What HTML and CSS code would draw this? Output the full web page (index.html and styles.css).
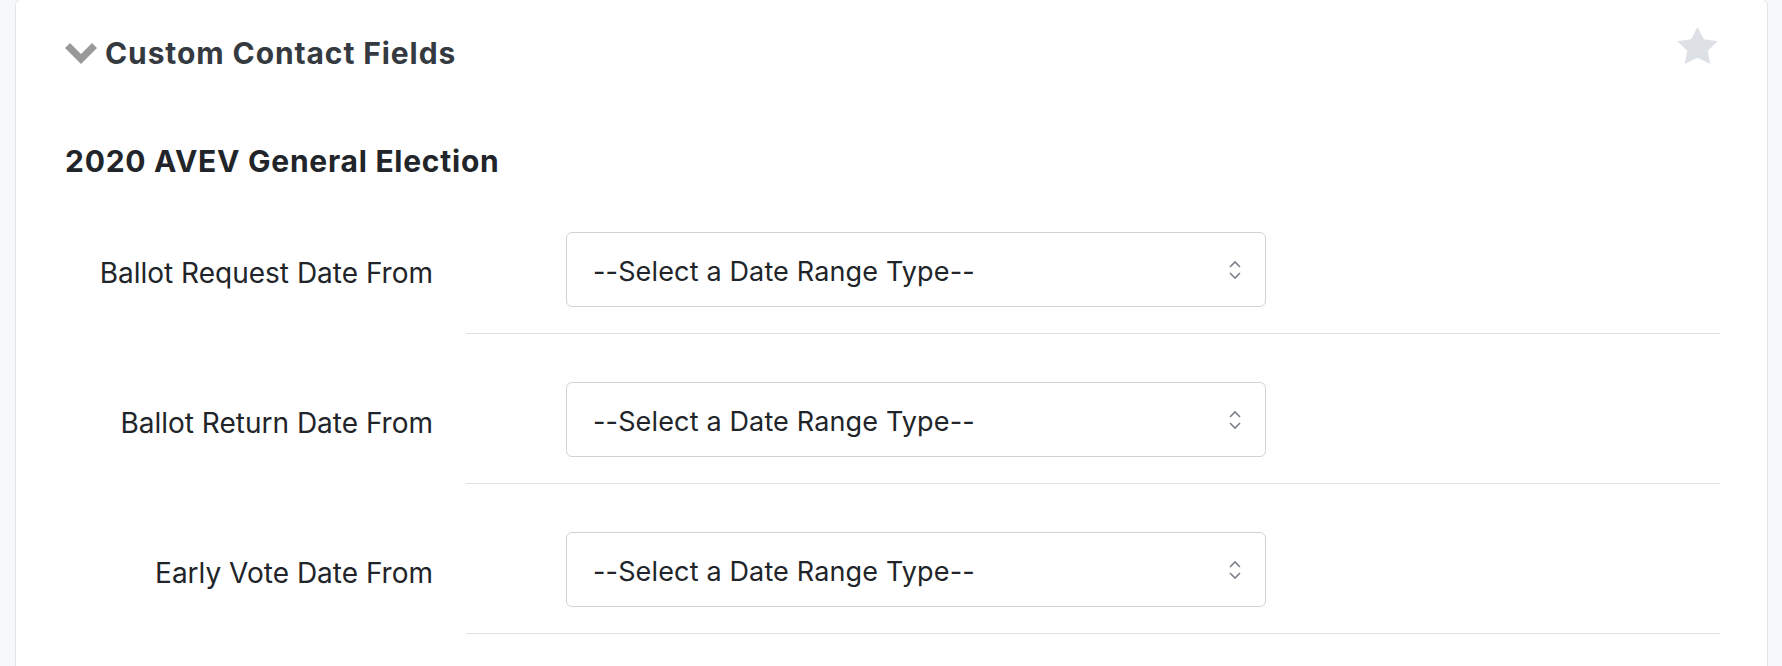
FILE: index.html
```html
<!DOCTYPE html>
<html lang="en">
<head>
<meta charset="utf-8">
<title>Custom Contact Fields</title>
<link rel="stylesheet" href="styles.css">
</head>
<body>
<div class="page">
  <section class="card">
    <header class="card-head">
      <h2 class="card-title">
        <svg class="chevron" width="32" height="21" viewBox="0 0 32 21" aria-hidden="true"><polygon points="0,5 5,0 16,11 27,0 32,5 16,21" fill="#999999"/></svg>
        <span>Custom Contact Fields</span>
      </h2>
      <svg class="star" width="41" height="37" viewBox="2 2 20 19.02" preserveAspectRatio="none" aria-hidden="true"><polygon points="12,2 15.09,8.26 22,9.27 17,14.14 18.18,21.02 12,17.77 5.82,21.02 7,14.14 2,9.27 8.91,8.26" fill="#dde0e5"/></svg>
    </header>

    <h3 class="group-title">2020 AVEV General Election</h3>

    <div class="form-row">
      <label class="row-label">Ballot Request Date From</label>
      <div class="row-field">
        <div class="select">
          <span>--Select a Date Range Type--</span>
          <svg class="updown" width="14" height="22" viewBox="0 0 14 22" aria-hidden="true"><polyline points="2,8 7,3 12,8" fill="none" stroke="#7b8188" stroke-width="1.6"/><polyline points="2,14 7,19 12,14" fill="none" stroke="#7b8188" stroke-width="1.6"/></svg>
        </div>
      </div>
    </div>

    <div class="form-row">
      <label class="row-label">Ballot Return Date From</label>
      <div class="row-field">
        <div class="select">
          <span>--Select a Date Range Type--</span>
          <svg class="updown" width="14" height="22" viewBox="0 0 14 22" aria-hidden="true"><polyline points="2,8 7,3 12,8" fill="none" stroke="#7b8188" stroke-width="1.6"/><polyline points="2,14 7,19 12,14" fill="none" stroke="#7b8188" stroke-width="1.6"/></svg>
        </div>
      </div>
    </div>

    <div class="form-row">
      <label class="row-label">Early Vote Date From</label>
      <div class="row-field">
        <div class="select">
          <span>--Select a Date Range Type--</span>
          <svg class="updown" width="14" height="22" viewBox="0 0 14 22" aria-hidden="true"><polyline points="2,8 7,3 12,8" fill="none" stroke="#7b8188" stroke-width="1.6"/><polyline points="2,14 7,19 12,14" fill="none" stroke="#7b8188" stroke-width="1.6"/></svg>
        </div>
      </div>
    </div>
  </section>
</div>
</body>
</html>
```

FILE: styles.css
```css
html, body {
  margin: 0;
  padding: 0;
  background: #f7f8fa;
  font-family: Inter, "Noto Sans", "Liberation Sans", sans-serif;
  color: #212529;
}

.page {
  padding: 0 14px 0 15px;
  height: 666px;
  overflow: hidden;
}

.card {
  margin-top: -1px;
  background: #ffffff;
  border: 1px solid #e2e5e9;
  border-radius: 6px;
  padding: 0 47px 0 49px;
  min-height: 700px;
}

.card-head {
  display: flex;
  justify-content: space-between;
  align-items: flex-start;
  padding-top: 36px;
}

.card-title {
  margin: 0;
  display: flex;
  align-items: center;
  gap: 8px;
  font-size: 30px;
  line-height: 34px;
  font-weight: 700;
  letter-spacing: 0.9px;
  color: #343a40;
}

.chevron {
  display: block;
}

.star {
  display: block;
  margin-top: -9px;
  margin-right: 2px;
}

.group-title {
  margin: 74px 0 6px;
  font-size: 30px;
  line-height: 34px;
  font-weight: 700;
  letter-spacing: 0.75px;
  color: #212529;
}

.form-row {
  display: flex;
}

.row-label {
  width: 401px;
  box-sizing: border-box;
  padding: 51px 33px 0 0;
  height: 126px;
  display: flex;
  align-items: center;
  justify-content: flex-end;
  font-size: 28px;
  color: #212529;
}

.row-field {
  flex: 1;
  padding: 48px 0 26px 100px;
  border-bottom: 1px solid #dee2e6;
}

.select {
  width: 700px;
  height: 75px;
  box-sizing: border-box;
  border: 1px solid #ced4da;
  border-radius: 6px;
  display: flex;
  align-items: center;
  justify-content: space-between;
  padding: 3px 23px 0 26px;
  font-size: 27px;
  letter-spacing: 0.15px;
  color: #212529;
}

.updown {
  display: block;
  margin-top: -3px;
}
```
